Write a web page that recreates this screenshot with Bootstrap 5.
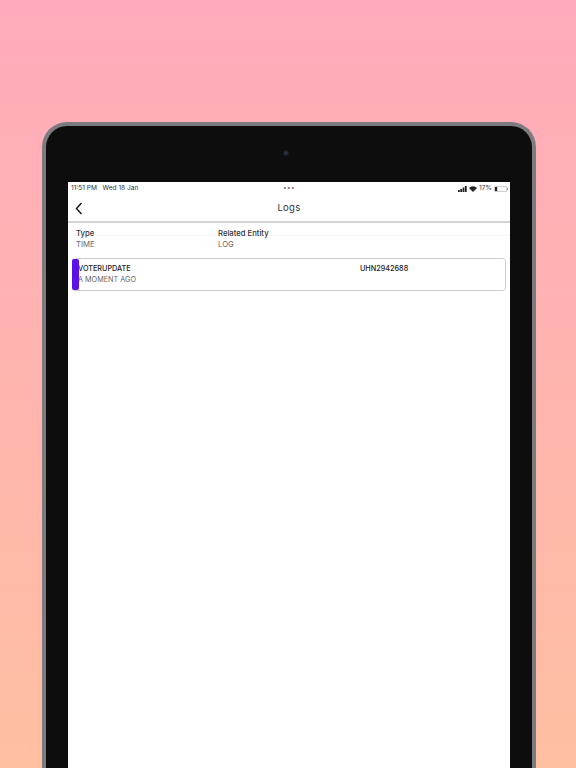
<!DOCTYPE html>
<html lang="en">
<head>
<meta charset="utf-8">
<title>Logs</title>
<link href="https://cdn.jsdelivr.net/npm/bootstrap@5.3.0/dist/css/bootstrap.min.css" rel="stylesheet">
<style>
html, body { height: 768px; overflow: hidden; }
body { background: linear-gradient(180deg, #ffabbc 0%, #ffbfa1 100%); font-family: Inter, "Liberation Sans", sans-serif; color: #222; padding: 122px 40px 0 42px; }
.tablet { height: 646px; background: #0d0d0d; border: 4px solid #7c7c80; border-bottom: 0; border-radius: 25px 25px 0 0; padding: 56px 22px 0; display: flex; flex-direction: column; position: relative; }
.lens { position: absolute; top: 24px; left: 50%; margin-left: -6px; width: 6px; height: 6px; border-radius: 50%; background: radial-gradient(circle, #2b3f66 0, #1c1f27 50%, #0d0d0d 100%); }
.screen { flex: 1; background: #fff; }
.statusline { height: 14px; padding: 0 2px 0 3px; font-size: 6.6px; color: #333; position: relative; }
.status-mid { position: absolute; left: 50%; transform: translateX(-50%); top: 2px; font-size: 6.5px; letter-spacing: .3px; color: #777; }
.status-right { gap: 2px; }
.topbar { height: 27px; padding: 0 7px; position: relative; border-bottom: 2px solid #d4d4d6; }
.topbar-title { font-size: 9.5px; color: #333; position: absolute; left: 0; right: 0; text-align: center; top: 5px; letter-spacing: .3px; }
.headings { padding: 5px 8px 0; height: 35px; background: linear-gradient(180deg, #fff 0, #fff 12px, #f7f7f8 12px, #f7f7f8 13px, #fff 13px); }
.cellcol { width: 142px; flex: none; }
.label-strong { font-size: 7.7px; font-weight: 500; color: #333; line-height: 11px; }
.label-soft { font-size: 7.7px; color: #666; line-height: 11px; }
.logcard { margin: 0 4px; height: 33px; border: 1px solid #cfcfd3; border-radius: 3px; position: relative; padding: 4px 4px 0 5px; }
.logcard .label-strong, .logcard .label-soft { font-size: 7.25px; }
.logcard .label-strong { color: #222; }
.logcard .wide-cell { width: 282px; flex: none; }
.stripe { position: absolute; left: -1px; top: 0; bottom: 0; width: 7px; background: #5a10e6; border-radius: 2px; }
</style>
</head>
<body>
<div class="tablet">
  <div class="lens"></div>
  <div class="screen">
    <div class="statusline d-flex justify-content-between align-items-center">
      <span>11:51 PM&nbsp;&nbsp; Wed 18 Jan</span>
      <span class="status-mid">•••</span>
      <span class="d-flex align-items-center status-right">
        <svg width="9" height="6" viewBox="0 0 9 6"><rect x="0" y="4" width="1.8" height="2" fill="#222"/><rect x="2.3" y="3" width="1.8" height="3" fill="#222"/><rect x="4.6" y="1.5" width="1.8" height="4.5" fill="#222"/><rect x="6.9" y="0" width="1.8" height="6" fill="#222"/></svg>
        <svg width="8" height="6" viewBox="0 0 8 6"><path d="M4 6 0 2a5.6 5.6 0 0 1 8 0z" fill="#222"/></svg>
        <span>17%</span>
        <svg width="14" height="6" viewBox="0 0 14 6"><rect x=".3" y=".3" width="12.4" height="5.4" rx="1.4" fill="none" stroke="#999" stroke-width=".6"/><rect x="1" y="1" width="2.2" height="4" fill="#222"/><rect x="13" y="2" width="1" height="2" fill="#999"/></svg>
      </span>
    </div>
    <div class="topbar d-flex align-items-center">
      <svg width="8" height="13" viewBox="0 0 8 13"><path d="M6.5 1 1.5 6.5l5 5.5" fill="none" stroke="#111" stroke-width="1.4"/></svg>
      <div class="topbar-title">Logs</div>
    </div>
    <div class="headings d-flex">
      <div class="cellcol">
        <div class="label-strong">Type</div>
        <div class="label-soft">TIME</div>
      </div>
      <div class="cellcol">
        <div class="label-strong">Related Entity</div>
        <div class="label-soft">LOG</div>
      </div>
    </div>
    <div class="logcard d-flex">
      <span class="stripe"></span>
      <div class="wide-cell">
        <div class="label-strong">VOTERUPDATE</div>
        <div class="label-soft">A MOMENT AGO</div>
      </div>
      <div class="cellcol">
        <div class="label-strong">UHN2942688</div>
      </div>
    </div>
  </div>
</div>
<script src="https://cdn.jsdelivr.net/npm/bootstrap@5.3.0/dist/js/bootstrap.bundle.min.js"></script>
</body>
</html>
